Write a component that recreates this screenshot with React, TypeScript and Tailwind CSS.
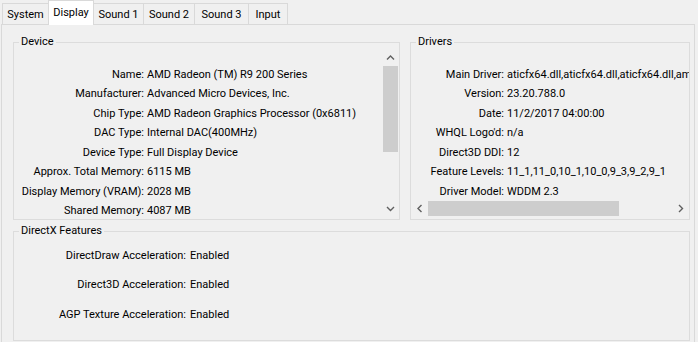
import React from "react";

const TABS = [
  { name: "System", cls: "w-[47px]" },
  { name: "Display", cls: "w-[46px]", active: true },
  { name: "Sound 1", cls: "w-[51px]" },
  { name: "Sound 2", cls: "w-[52px]" },
  { name: "Sound 3", cls: "w-[55px]" },
  { name: "Input", cls: "w-[40px]" },
];

const DEVICE = [
  ["Name", "AMD Radeon (TM) R9 200 Series"],
  ["Manufacturer", "Advanced Micro Devices, Inc."],
  ["Chip Type", "AMD Radeon Graphics Processor (0x6811)"],
  ["DAC Type", "Internal DAC(400MHz)"],
  ["Device Type", "Full Display Device"],
  ["Approx. Total Memory", "6115 MB"],
  ["Display Memory (VRAM)", "2028 MB"],
  ["Shared Memory", "4087 MB"],
];

const DRIVERS = [
  ["Main Driver", "aticfx64.dll,aticfx64.dll,aticfx64.dll,amdxc64.dll"],
  ["Version", "23.20.788.0"],
  ["Date", "11/2/2017 04:00:00"],
  ["WHQL Logo'd", "n/a"],
  ["Direct3D DDI", "12"],
  ["Feature Levels", "11_1,11_0,10_1,10_0,9_3,9_2,9_1"],
  ["Driver Model", "WDDM 2.3"],
];

const FEATURES = [
  ["DirectDraw Acceleration", "Enabled"],
  ["Direct3D Acceleration", "Enabled"],
  ["AGP Texture Acceleration", "Enabled"],
];

function Arrow({ dir }: { dir: "up" | "down" | "left" | "right" }) {
  const pts = {
    up: "1,5.5 4.5,2 8,5.5",
    down: "1,2 4.5,5.5 8,2",
    left: "5.5,1 2,4.5 5.5,8",
    right: "2,1 5.5,4.5 2,8",
  }[dir];
  const horiz = dir === "left" || dir === "right";
  return (
    <svg width={horiz ? 7 : 9} height={horiz ? 9 : 7}>
      <polyline points={pts} fill="none" stroke="#606060" strokeWidth="1.4" />
    </svg>
  );
}

function VScroll() {
  return (
    <div className="flex flex-col w-[17px] shrink-0">
      <div className="h-[17px] flex items-center justify-center">
        <Arrow dir="up" />
      </div>
      <div className="flex-1 px-px">
        <div className="h-[86px] bg-[#cdcdcd]" />
      </div>
      <div className="h-[17px] flex items-center justify-center">
        <Arrow dir="down" />
      </div>
    </div>
  );
}

function HScroll() {
  return (
    <div className="flex h-[17px] shrink-0">
      <div className="w-[17px] flex items-center justify-center">
        <Arrow dir="left" />
      </div>
      <div className="flex-1 py-px">
        <div className="w-[191px] h-full bg-[#cdcdcd]" />
      </div>
      <div className="w-[17px] flex items-center justify-center">
        <Arrow dir="right" />
      </div>
    </div>
  );
}

export default function App() {
  return (
    <div className="w-[698px] h-[342px] overflow-hidden bg-[#f0f0f0] text-[11px] text-black font-['Segoe_UI',Roboto,sans-serif]">
      {/* Tabs */}
      <div className="flex items-end h-[24px] pl-[2px]">
        {TABS.map((t, i) => (
          <div
            key={t.name}
            className={`${t.cls} ${i > 0 ? "-ml-px" : ""} ${
              t.active
                ? "relative z-10 h-[25px] -mb-px bg-white pt-[1px]"
                : "h-[21px] bg-[#f0f0f0] pt-[3px]"
            } flex items-center justify-center border-t border-l border-r border-[#d9d9d9]`}
          >
            {t.name}
          </div>
        ))}
      </div>

      {/* Tab page */}
      <div className="ml-px w-[694px] h-[320px] border-t border-l border-r border-[#d9d9d9] pl-[11px] pt-[10px]">
        <div className="flex gap-[10px]">
          {/* Device */}
          <fieldset className="w-[387px] min-w-0 shrink-0 h-[185px] border border-[#dcdcdc]">
            <legend className="ml-[5px] px-[2px] leading-[14px]">Device</legend>
            <div className="flex h-[168px]">
              <div className="flex-1 min-w-0 overflow-hidden pt-[16px]">
                {DEVICE.map(([k, v]) => (
                  <div key={k} className="flex items-center h-[19.5px] whitespace-nowrap">
                    <span className="w-[130px] shrink-0 text-right">{k}:</span>
                    <span className="ml-[3px]">{v}</span>
                  </div>
                ))}
              </div>
              <VScroll />
            </div>
          </fieldset>

          {/* Drivers */}
          <fieldset className="w-[280px] min-w-0 shrink-0 h-[185px] border border-[#dcdcdc]">
            <legend className="ml-[5px] px-[2px] leading-[14px]">Drivers</legend>
            <div className="flex flex-col h-[168px]">
              <div className="flex-1 min-w-0 overflow-hidden pt-[16px]">
                {DRIVERS.map(([k, v]) => (
                  <div key={k} className="flex items-center h-[19.5px] whitespace-nowrap">
                    <span className="w-[93px] shrink-0 text-right">{k}:</span>
                    <span className="ml-[3px]">{v}</span>
                  </div>
                ))}
              </div>
              <HScroll />
            </div>
          </fieldset>
        </div>

        {/* DirectX Features */}
        <fieldset className="mt-[4px] w-[677px] min-w-0 h-[117px] border border-[#dcdcdc]">
          <legend className="ml-[5px] px-[2px] leading-[14px]">DirectX Features</legend>
          <div className="pt-[3px]">
            {FEATURES.map(([k, v]) => (
              <div key={k} className="flex items-center h-[29.5px] whitespace-nowrap">
                <span className="w-[172px] shrink-0 text-right">{k}:</span>
                <span className="ml-[4px]">{v}</span>
              </div>
            ))}
          </div>
        </fieldset>
      </div>
    </div>
  );
}
